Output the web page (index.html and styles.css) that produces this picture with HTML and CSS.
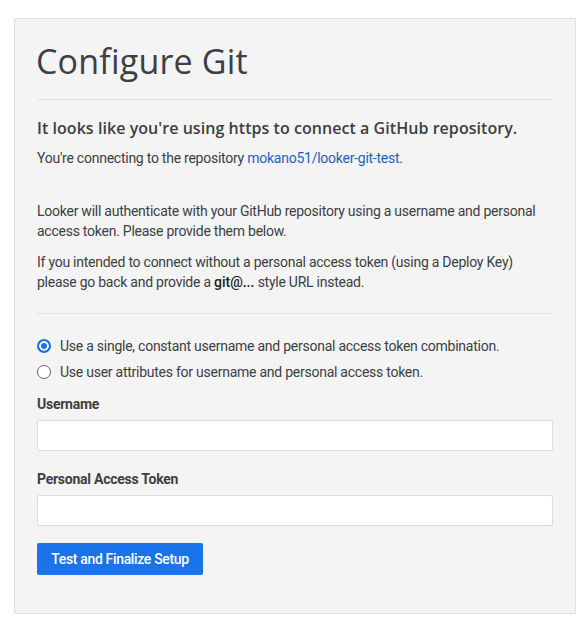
FILE: index.html
```html
<!DOCTYPE html>
<html>
<head>
<meta charset="utf-8">
<link rel="stylesheet" href="styles.css">
</head>
<body>
<div class="panel">
  <h1 class="title">Configure Git</h1>
  <hr class="rule">
  <h2 class="subtitle">It looks like you're using https to connect a GitHub repository.</h2>
  <p class="text first">You're connecting to the repository <a class="link" href="#">mokano51/looker-git-test</a>.</p>
  <p class="text gap-top">Looker will authenticate with your GitHub repository using a username and personal access token. Please provide them below.</p>
  <p class="text next">If you intended to connect without a personal access token (using a Deploy Key) please go back and provide a <b class="strong">git@...</b> style URL instead.</p>
  <hr class="rule rule-2">
  <div class="radios">
    <label class="radio"><span class="dot checked"></span>Use a single, constant username and personal access token combination.</label>
    <label class="radio"><span class="dot"></span>Use user attributes for username and personal access token.</label>
  </div>
  <div class="field">
    <div class="label">Username</div>
    <div class="input"></div>
  </div>
  <div class="field field-2">
    <div class="label">Personal Access Token</div>
    <div class="input"></div>
  </div>
  <button class="btn">Test and Finalize Setup</button>
</div>
</body>
</html>
```
FILE: styles.css
```css
* { box-sizing: border-box; }
html, body { margin: 0; padding: 0; background: #fff; }
body { font-family: Roboto, "Liberation Sans", sans-serif; color: #3c4043; }
.panel {
  margin: 18px 0 0 14px;
  width: 562px;
  height: 596px;
  background: #f4f4f4;
  border: 1px solid #e0e0e0;
  padding: 0 22px;
  display: flex;
  flex-direction: column;
}
.title {
  font-family: "Open Sans", sans-serif;
  font-weight: 400;
  font-size: 34px;
  line-height: 44px;
  margin: 20px 0 0 -1px;
  color: #3c4043;
  letter-spacing: 0.2px;
}
.rule { border: 0; border-top: 1px solid #e2e2e2; margin: 16px 0 0 0; width: 100%; }
.subtitle {
  font-family: "Open Sans", sans-serif;
  font-size: 16px;
  font-weight: 600;
  line-height: 22px;
  margin: 17px 0 0 0;
  color: #3c4043;
  letter-spacing: 0.05px;
}
.text { font-size: 14px; line-height: 20px; margin: 0; letter-spacing: -0.25px; }
.first { margin-top: 9px; }
.gap-top { margin-top: 33px; }
.next { margin-top: 11px; }
.link { text-decoration: none; color: #1a62c4; }
.strong { font-weight: 500; color: #202124; letter-spacing: 0; }
.rule-2 { margin-top: 21px; }
.radios { display: flex; flex-direction: column; gap: 6px; margin-top: 22px; }
.radio { display: flex; align-items: center; font-size: 14px; line-height: 20px; letter-spacing: -0.25px; }
.dot {
  width: 14px; height: 14px; border-radius: 50%;
  border: 1px solid #5f6368; background: #fff;
  margin-right: 9px; flex: none;
}
.dot.checked { border: 2px solid #1a73e8; box-shadow: inset 0 0 0 2px #fff; background: #1a73e8; }
.field { margin-top: 12px; }
.field-2 { margin-top: 18px; }
.label { font-size: 14px; font-weight: 700; line-height: 20px; color: #3c4043; letter-spacing: -0.25px; }
.input {
  margin-top: 6px; height: 31px; background: #fff;
  border: 1px solid #dadce0; border-radius: 2px;
}
.btn {
  margin-top: 17px; align-self: flex-start;
  height: 32px; width: 166px;
  background: #1a73e8; color: #fff; border: 0; border-radius: 2px;
  font-family: Roboto, sans-serif; font-size: 14px; font-weight: 500; letter-spacing: -0.35px;
}
```
